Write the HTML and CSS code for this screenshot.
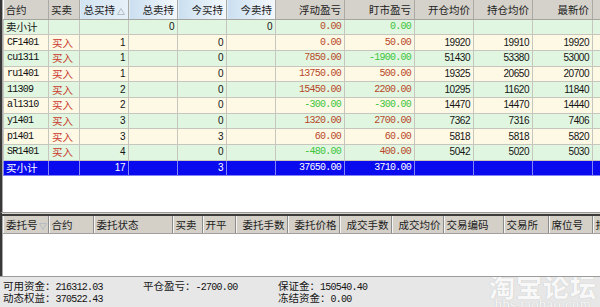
FILE: index.html
```html
<!DOCTYPE html>
<html>
<head>
<meta charset="utf-8">
<title>持仓</title>
<link rel="stylesheet" href="styles.css">
</head>
<body>
<div class="app">
  <div class="pane pos">
    <table class="grid">
      <colgroup>
        <col class="w45"><col class="w31"><col class="w49"><col class="w49"><col class="w49"><col class="w49"><col class="w69"><col class="w70"><col class="w59"><col class="w59"><col class="w60"><col class="w40">
      </colgroup>
      <thead>
        <tr>
          <th class="l">合约</th>
          <th class="l">买卖</th>
          <th class="hb sorted">总买持<svg class="tri" width="8" height="7" viewBox="0 0 8 7"><polygon points="0.5,6.5 4,0.5 7.5,6.5" fill="none" stroke="#b4bcc4"/></svg></th>
          <th class="hb">总卖持</th>
          <th class="hb">今买持</th>
          <th class="hb">今卖持</th>
          <th>浮动盈亏</th>
          <th>盯市盈亏</th>
          <th>开仓均价</th>
          <th>持仓均价</th>
          <th>最新价</th>
          <th></th>
        </tr>
      </thead>
      <tbody>
        <tr class="g"><td class="cn">卖小计</td><td></td><td></td><td class="n">0</td><td></td><td class="n">0</td><td class="m red">0.00</td><td class="m grn">0.00</td><td></td><td></td><td></td><td></td></tr>
        <tr class="y"><td class="code">CF1401</td><td class="buy">买入</td><td class="n">1</td><td></td><td class="n">0</td><td></td><td class="m red">0.00</td><td class="m red">50.00</td><td class="n">19920</td><td class="n">19910</td><td class="n">19920</td><td></td></tr>
        <tr class="g"><td class="code">cu1311</td><td class="buy">买入</td><td class="n">1</td><td></td><td class="n">0</td><td></td><td class="m red">7850.00</td><td class="m grn">-1900.00</td><td class="n">51430</td><td class="n">53380</td><td class="n">53000</td><td></td></tr>
        <tr class="y"><td class="code">ru1401</td><td class="buy">买入</td><td class="n">1</td><td></td><td class="n">0</td><td></td><td class="m red">13750.00</td><td class="m red">500.00</td><td class="n">19325</td><td class="n">20650</td><td class="n">20700</td><td></td></tr>
        <tr class="g"><td class="code">11309</td><td class="buy">买入</td><td class="n">2</td><td></td><td class="n">0</td><td></td><td class="m red">15450.00</td><td class="m red">2200.00</td><td class="n">10295</td><td class="n">11620</td><td class="n">11840</td><td></td></tr>
        <tr class="y"><td class="code">al1310</td><td class="buy">买入</td><td class="n">2</td><td></td><td class="n">0</td><td></td><td class="m grn">-300.00</td><td class="m grn">-300.00</td><td class="n">14470</td><td class="n">14470</td><td class="n">14440</td><td></td></tr>
        <tr class="g"><td class="code">y1401</td><td class="buy">买入</td><td class="n">3</td><td></td><td class="n">0</td><td></td><td class="m red">1320.00</td><td class="m red">2700.00</td><td class="n">7362</td><td class="n">7316</td><td class="n">7406</td><td></td></tr>
        <tr class="y"><td class="code">p1401</td><td class="buy">买入</td><td class="n">3</td><td></td><td class="n">3</td><td></td><td class="m red">60.00</td><td class="m red">60.00</td><td class="n">5818</td><td class="n">5818</td><td class="n">5820</td><td></td></tr>
        <tr class="g"><td class="code">SR1401</td><td class="buy">买入</td><td class="n">4</td><td></td><td class="n">0</td><td></td><td class="m grn">-480.00</td><td class="m red">400.00</td><td class="n">5042</td><td class="n">5020</td><td class="n">5030</td><td></td></tr>
        <tr class="sel"><td class="cn">买小计</td><td></td><td class="n">17</td><td></td><td class="n">3</td><td></td><td class="m">37650.00</td><td class="m">3710.00</td><td></td><td></td><td></td><td></td></tr>
      </tbody>
    </table>
  </div>
  <div class="splitter"></div>
  <div class="pane orders">
    <table class="grid2">
      <colgroup>
        <col class="w45"><col class="w45"><col class="w79"><col class="w30"><col class="w33"><col class="w52"><col class="w52"><col class="w52"><col class="w52"><col class="w60"><col class="w45"><col class="w44"><col class="w40">
      </colgroup>
      <thead>
        <tr>
          <th>委托号<svg class="tri2" width="8" height="7" viewBox="0 0 8 7"><polygon points="0.5,0.5 7.5,0.5 4,6.5" fill="none" stroke="#b4bcc4"/></svg></th>
          <th>合约</th>
          <th>委托状态</th>
          <th>买卖</th>
          <th>开平</th>
          <th class="r">委托手数</th>
          <th class="r">委托价格</th>
          <th class="r">成交手数</th>
          <th class="r">成交均价</th>
          <th>交易编码</th>
          <th>交易所</th>
          <th>席位号</th>
          <th>报单时间</th>
        </tr>
      </thead>
    </table>
  </div>
  <div class="status">
    <div class="cell">可用资金：<span class="m">216312.03</span></div>
    <div class="cell">平仓盈亏：<span class="m">-2700.00</span></div>
    <div class="cell">保证金：<span class="m">150540.40</span></div>
    <div class="cell">动态权益：<span class="m">370522.43</span></div>
    <div class="cell"></div>
    <div class="cell">冻结资金：<span class="m">0.00</span></div>
    <div class="mark">
      <div class="mark-big">淘宝论坛</div>
      <div class="mark-small">bbs.taobao.com</div>
    </div>
  </div>
</div>
</body>
</html>
```
FILE: styles.css
```css
* { box-sizing: border-box; }
html, body { margin: 0; padding: 0; }
body {
  width: 600px;
  height: 307px;
  overflow: hidden;
  background: #fff;
  font-family: "Noto Sans CJK SC", "Liberation Sans", sans-serif;
  font-size: 10.5px;
  color: #141414;
}
.app {
  display: flex;
  flex-direction: column;
  width: 600px;
  height: 307px;
  overflow: hidden;
}
.pane {
  border-left: 2px solid #383838;
  padding-left: 1px;
  background: linear-gradient(to right, #a8a8a8 1px, #fff 1px);
  overflow: hidden;
  flex: none;
}
.pos { height: 212px; }
.orders { height: 60px; }
.splitter {
  flex: none;
  height: 4px;
  border-left: 2px solid #383838;
  background: #d4d0c8;
  border-top: 1px solid #9a9a9a;
  border-bottom: 2px solid #3c3c3c;
}

.w30 { width: 30px; } .w31 { width: 31px; } .w33 { width: 33px; }
.w40 { width: 40px; } .w44 { width: 44px; } .w45 { width: 45px; }
.w49 { width: 49px; } .w52 { width: 52px; } .w59 { width: 59px; }
.w60 { width: 60px; } .w69 { width: 69px; } .w70 { width: 70px; }
.w79 { width: 79px; }

.grid {
  border-collapse: collapse;
  table-layout: fixed;
  width: 629px;
}
.grid th {
  height: 19px;
  padding: 0 3px;
  font-weight: normal;
  text-align: right;
  white-space: nowrap;
  overflow: hidden;
  line-height: 13px;
  background: #d5d2cb;
  border-right: 1px solid #aaa9a4;
  border-bottom: 1px solid #a4a4a0;
  color: #1c1c1c;
}
.grid th.l { text-align: left; padding-left: 2px; }
.grid th.hb { background: linear-gradient(to right, #cadff0, #f3f8fc); }
.grid th.sorted { background: linear-gradient(to right, #d2e4f2, #e6f0f8); }
.tri { margin-left: 2px; vertical-align: -1px; }

.grid td {
  height: 15.7px;
  padding: 0 3px;
  border: 1px solid #c6c6bf;
  line-height: 12px;
  white-space: nowrap;
  overflow: hidden;
}
.grid tr.g td { background: #e1f6e0; }
.grid tr.y td { background: #fdf9e5; }
.grid tr.sel td {
  background: #0a0aef;
  color: #fff;
  border-color: #8484f6;
}
.cn { padding-left: 2px !important; }
.code {
  font-family: "Liberation Mono", monospace;
  font-size: 10px;
  letter-spacing: -0.75px;
  padding-left: 3px !important;
  color: #101010;
}
.buy { color: #c8362a; }
.n {
  text-align: right;
  font-family: "Liberation Sans", sans-serif;
  font-size: 10px;
  letter-spacing: -0.45px;
}
.m {
  font-family: "Liberation Mono", monospace;
  font-size: 10px;
  letter-spacing: -0.75px;
}
td.m { text-align: right; }
.red { color: #b8482a; }
.grn { color: #3cc43c; }

.grid2 {
  border-collapse: collapse;
  table-layout: fixed;
  width: 629px;
}
.grid2 th {
  height: 17px;
  padding: 0 2px 0 3px;
  font-weight: normal;
  text-align: left;
  white-space: nowrap;
  overflow: hidden;
  line-height: 13px;
  background: #d4d0c8;
  border-right: 1px solid #8c8c8c;
  border-bottom: 1px solid #a0a0a0;
  box-shadow: inset 1px 0 0 #f4f4f4;
  color: #1c1c1c;
}
.grid2 th.r { text-align: right; padding-right: 2px; }
.tri2 { margin-left: 1px; vertical-align: -1px; }

.status {
  position: relative;
  flex: 1;
  display: grid;
  grid-template-columns: 140px 135px 1fr;
  grid-auto-rows: 12px;
  align-content: start;
  padding: 3px 0 0 3px;
  background: #e7e7e7;
  border-top: 1px solid #9c9c9c;
  line-height: 12px;
  overflow: hidden;
}
.cell { white-space: nowrap; }
.status .m { font-size: 10px; }
.mark {
  position: absolute;
  left: 488px;
  top: -4px;
  width: 110px;
  text-align: center;
  color: rgba(255, 255, 255, 0.92);
  text-shadow: 0 0 1px rgba(140, 140, 140, 0.5);
}
.mark-big {
  font-family: "Noto Sans CJK SC", sans-serif;
  font-weight: bold;
  font-size: 26px;
  line-height: 26px;
  letter-spacing: 1px;
}
.mark-small {
  font-family: "Liberation Serif", serif;
  font-size: 14px;
  line-height: 12px;
  letter-spacing: 0.6px;
}
```
